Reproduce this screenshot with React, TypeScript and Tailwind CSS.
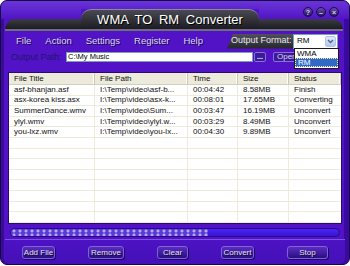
const rows = [
  ['asf-bhanjan.asf', 'I:\\Temp\\video\\asf-b...', '00:04:42', '8.58MB', 'Finish'],
  ['asx-korea kiss.asx', 'I:\\Temp\\video\\asx-k...', '00:08:01', '17.65MB', 'Converting'],
  ['SummerDance.wmv', 'I:\\Temp\\video\\Sum...', '00:03:47', '16.19MB', 'Unconvert'],
  ['ylyl.wmv', 'I:\\Temp\\video\\ylyl.w...', '00:03:29', '8.49MB', 'Unconvert'],
  ['you-lxz.wmv', 'I:\\Temp\\video\\you-lx...', '00:04:30', '9.89MB', 'Unconvert'],
]

const colW = ['w-[86px]', 'w-[93px]', 'w-[50px]', 'w-[51px]', 'flex-1']
const headers = ['File Title', 'File Path', 'Time', 'Size', 'Status']

const SkinButton = ({ label, w }: { label: string; w: string }) => (
  <div className={`${w} h-[13px] rounded-[3px] border border-[#7e62d8] bg-gradient-to-b from-[#5a2cc0] to-[#2c0c84] flex items-center justify-center text-[8px] text-[#e4e0f4] [text-shadow:1px_1px_0_#10053a] shadow-[1px_1px_0_#1c0860]`}>
    {label}
  </div>
)

const WinBtn = ({ glyph }: { glyph: string }) => (
  <div className="w-[10px] h-[10px] rounded-full bg-gradient-to-b from-[#6a4ab0] to-[#2a1260] border border-[#1c0c50] flex items-center justify-center text-[7px] leading-none text-[#d8d0f0] font-bold">
    {glyph}
  </div>
)

const App = () => {
  return (
    <div className="w-[350px] h-[266px] bg-white" style={{ fontFamily: '"Liberation Sans", Arial, sans-serif' }}>
      <div className="relative w-[350px] h-[265px] rounded-[7px] border border-[#160646] bg-[#5212c6] overflow-hidden flex flex-col shadow-[inset_3px_0_0_#3a0a98,inset_-5px_0_0_#3a0aa0]">

        {/* title bar */}
        <div className="h-[30px] flex shrink-0">
          <div className="w-[80px] flex flex-col">
            <div className="h-[18px] bg-gradient-to-b from-[#6a34d8] to-[#5212c6]" />
            <div className="h-[10px] ml-[4px] rounded-tl-[14px] bg-gradient-to-b from-[#3c3c44] to-[#1c1c22]" />
            <div className="h-[2px] ml-[4px] bg-[#6e6e80]" />
          </div>
          <div className="w-[178px] flex flex-col">
            <div className="h-[8px] bg-gradient-to-b from-[#6a34d8] to-[#5e22d0]" />
            <div className="h-[20px] rounded-t-[10px] bg-gradient-to-b from-[#4a4a52] to-[#1c1c22] border-t border-[#8a8a98] flex items-center justify-center text-[13px] text-white [word-spacing:3px] [text-shadow:1px_1px_0_#000]">
              WMA TO RM Converter
            </div>
            <div className="h-[2px] bg-[#6e6e80]" />
          </div>
          <div className="flex-1 flex flex-col">
            <div className="h-[18px] bg-gradient-to-b from-[#6a34d8] to-[#5212c6] flex justify-end items-start pt-[6px] pr-[10px] gap-[3px]">
              <WinBtn glyph="?" />
              <WinBtn glyph="–" />
              <WinBtn glyph="×" />
            </div>
            <div className="h-[10px] mr-[6px] rounded-tr-[10px] bg-gradient-to-b from-[#3c3c44] to-[#1c1c22]" />
            <div className="h-[2px] mr-[6px] bg-[#6e6e80]" />
          </div>
        </div>

        {/* menu row */}
        <div className="h-[20px] flex items-center pl-[15px] pr-[11px] shrink-0">
          <div className="flex gap-[14px] text-[9.5px] text-[#dcd8ee] [text-shadow:1px_1px_0_#1a0650]">
            <span>File</span>
            <span>Action</span>
            <span>Settings</span>
            <span>Register</span>
            <span>Help</span>
          </div>
          <div className="ml-auto flex items-center">
            <div className="h-[15px] w-[66px] pl-[4px] bg-gradient-to-b from-[#50505a] to-[#26262c] flex items-center text-[9px] text-[#e8e8f0] [clip-path:polygon(6px_0,100%_0,100%_100%,0_100%)]">
              Output Format:
            </div>
            <div className="h-[15px] w-[45px] bg-white border border-[#7f9db9] flex items-center pl-[3px] text-[8px] text-black">
              RM
              <div className="ml-auto mr-[1px] w-[11px] h-[11px] rounded-[2px] bg-gradient-to-b from-[#dfe8fa] to-[#b4c8ee] border border-[#b0c4ea] flex items-center justify-center">
                <svg width="7" height="5" viewBox="0 0 7 5"><path d="M1 1 L3.5 3.5 L6 1" stroke="#4d6185" strokeWidth="1.3" fill="none" /></svg>
              </div>
            </div>
          </div>
        </div>

        {/* output path row */}
        <div className="h-[12px] flex items-center pl-[10px] shrink-0">
          <span className="w-[55px] text-[9px] text-[#1e1670] leading-none">Output Path:</span>
          <div className="w-[187px] h-[10px] bg-white border border-[#7f9db9] flex items-center pl-[1px] text-[7.5px] text-black leading-none">C:\My Music</div>
          <div className="ml-[1px] w-[12px] h-[10px] rounded-[2px] bg-[#3a1a96] border border-[#8a70dc] flex items-center justify-center text-[7px] leading-none text-white font-bold pb-[2px]">...</div>
          <div className="ml-[7px] w-[32px] h-[10px] rounded-[2px] bg-[#3a1a96] border border-[#8a70dc] flex items-center pl-[3px] text-[8px] leading-none text-[#ddd8f0]">Open</div>
        </div>

        {/* file table */}
        <div className="mt-[9px] mx-[7px] h-[152px] bg-white border border-[#2a0a70] flex flex-col text-[8px] text-[#111] shrink-0">
          <div className="h-[12px] flex bg-[#ebeadb] border-b border-[#d2cfbd]">
            {headers.map((h, i) => (
              <div key={h} className={`${colW[i]} pl-[5px] flex items-center border-r border-[#c9c6b4] shadow-[inset_-1px_0_0_#fff]`}>{h}</div>
            ))}
          </div>
          {Array.from({ length: 13 }).map((_, r) => (
            <div key={r} className="h-[10.7px] flex border-b border-[#efebdc]">
              {colW.map((w, i) => (
                <div key={i} className={`${w} pl-[5px] flex items-center leading-none whitespace-nowrap overflow-hidden ${i < 4 ? 'border-r border-[#efebdc]' : ''}`}>
                  {rows[r] ? rows[r][i] : ''}
                </div>
              ))}
            </div>
          ))}
        </div>

        {/* progress */}
        <div className="mt-[4px] mx-[9px] h-[9px] rounded-full border border-[#2a0a84] bg-gradient-to-b from-[#4a24f4] to-[#3814d4] flex overflow-hidden shrink-0">
          <div className="w-[197px] h-full bg-[#5a3ad6] bg-[radial-gradient(circle,#b4a8f4_1.4px,transparent_1.7px)] bg-[length:6px_4px]" />
        </div>

        {/* buttons */}
        <div className="mt-[2px] mx-[4px] flex-1 rounded-b-[6px] border-t border-[#7a52e6] bg-gradient-to-b from-[#4c12c4] to-[#4410b8] flex items-start pt-[6px] justify-between px-[17px]">
          <SkinButton label="Add File" w="w-[33px]" />
          <SkinButton label="Remove" w="w-[36px]" />
          <SkinButton label="Clear" w="w-[31px]" />
          <SkinButton label="Convert" w="w-[33px]" />
          <SkinButton label="Stop" w="w-[41px]" />
        </div>

        {/* open dropdown list */}
        <div className="absolute left-[293px] top-[47px] w-[45px] h-[21px] bg-white border border-[#1c1c1c] text-[8px] leading-none">
          <div className="h-[9px] pl-[2px] flex items-center text-black">WMA</div>
          <div className="h-[9px] pl-[2px] flex items-center bg-[#316ac5] text-white border border-dotted border-[#f0f0a0]">RM</div>
        </div>
      </div>
    </div>
  )
}

export default App
